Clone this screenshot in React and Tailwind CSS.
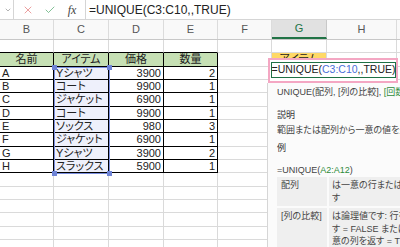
import React from 'react';
import { X, Check, ChevronDown } from 'lucide-react';

const FONT = "font-['Liberation_Sans','Noto_Sans_CJK_JP',sans-serif] [font-feature-settings:'palt']";

const items = [
  ['A', 'Yシャツ', 3900, 2],
  ['B', 'コート', 9900, 1],
  ['C', 'ジャケット', 6900, 1],
  ['D', 'コート', 9900, 1],
  ['E', 'ソックス', 980, 3],
  ['F', 'ジャケット', 6900, 1],
  ['G', 'Yシャツ', 3900, 2],
  ['H', 'スラックス', 5900, 1],
];

// column widths (B..I)
const W = ['w-[54px]', 'w-[55px]', 'w-[55px]', 'w-[54px]', 'w-[54px]', 'w-[55px]', 'w-[70px]', 'w-[30px]'];
const LETTERS = ['B', 'C', 'D', 'E', 'F', 'G', 'H', 'I'];

const Cell = ({ i, className = 'border-[#dadada]', children }) => (
  <div className={`${W[i]} h-full shrink-0 border-r border-b flex items-center px-[2px] overflow-hidden whitespace-nowrap ${className}`}>
    {children}
  </div>
);

const Row = ({ children }) => <div className="flex h-[13.33px]">{children}</div>;

const EmptyRow = () => (
  <Row>
    {W.map((_, i) => <Cell key={i} i={i} />)}
  </Row>
);

const App = () => {
  return (
    <div className={`relative w-[400px] h-[247px] overflow-hidden bg-white text-[#222] ${FONT}`}>
      {/* Formula bar */}
      <div className="flex h-[20px] border-b border-[#d5d5d5] bg-white">
        <div className="w-[14px] h-full flex items-center justify-end pr-[1px] border-r border-[#d5d5d5]">
          <ChevronDown size={8} strokeWidth={1.5} className="text-[#666]" />
        </div>
        <div className="w-[71px] h-full flex items-center">
          <div className="ml-[8px] w-[12px] flex justify-center">
            <X size={12} strokeWidth={1.3} className="text-[#e06b6b]" />
          </div>
          <div className="ml-[10px] w-[12px] flex justify-center">
            <Check size={12} strokeWidth={1.3} className="text-[#3f9f5f]" />
          </div>
          <div className="ml-[10px] w-[12px] flex justify-center font-['Liberation_Serif',serif] italic text-[12px] text-[#444]">
            fx
          </div>
        </div>
        <div className="flex-1 h-full border-l border-[#d5d5d5] flex items-center pl-[3px] text-[12px] whitespace-nowrap">
          =UNIQUE(C3:C10,,TRUE)
        </div>
      </div>

      {/* Column headers */}
      <div className="flex h-[20px] bg-[#f9f9f9] border-b border-[#c8c8c8]">
        {LETTERS.map((l, i) => (
          <div
            key={l}
            className={`${W[i]} h-full shrink-0 flex items-center justify-center border-r text-[11px] ${
              l === 'G'
                ? 'bg-[#e1e1e1] border-[#c8c8c8] border-b-2 border-b-[#217346] text-[#217346]'
                : 'border-[#dcdcdc] text-[#555]'
            }`}
          >
            {l}
          </div>
        ))}
      </div>

      {/* Sheet body */}
      <div className="text-[11px]">
        <Row>
          {W.map((_, i) => (
            <Cell key={i} i={i} className={i < 4 ? 'border-r-[#dadada] border-b-black' : 'border-[#dadada]'} />
          ))}
        </Row>
        <Row>
          {['名前', 'アイテム', '価格', '数量'].map((t, i) => (
            <Cell key={t} i={i} className="border-black bg-[#c6e0b4] justify-center">{t}</Cell>
          ))}
          <Cell i={4} />
          <Cell i={5} className="border-[#dadada] bg-[#ffd966] justify-center">アイテム</Cell>
          <Cell i={6} />
          <Cell i={7} />
        </Row>
        {items.map(([name, item, price, qty]) => (
          <Row key={name}>
            <Cell i={0} className="border-black">{name}</Cell>
            <Cell i={1} className="border-black bg-[#eef0fb]">{item}</Cell>
            <Cell i={2} className="border-black justify-end">{price}</Cell>
            <Cell i={3} className="border-black justify-end">{qty}</Cell>
            <Cell i={4} />
            <Cell i={5} />
            <Cell i={6} />
            <Cell i={7} />
          </Row>
        ))}
        {[0, 1, 2, 3, 4, 5].map((k) => <EmptyRow key={k} />)}
      </div>

      {/* Reference highlight C3:C10 */}
      <div className="absolute left-[54px] top-[66.67px] w-[56px] h-[107px] border-[1.5px] border-[#7b8fe0] pointer-events-none">
        <div className="absolute -left-[3px] -top-[3px] w-[5px] h-[5px] bg-[#6f84d6]" />
        <div className="absolute -right-[3px] -top-[3px] w-[5px] h-[5px] bg-[#6f84d6]" />
        <div className="absolute -left-[3px] -bottom-[3px] w-[5px] h-[5px] bg-[#6f84d6]" />
        <div className="absolute -right-[3px] -bottom-[3px] w-[5px] h-[5px] bg-[#6f84d6]" />
      </div>

      {/* Editing cell G4 with pink marker */}
      <div className="absolute left-[268px] top-[58px] w-[130px] h-[25px] border-[2.5px] border-[#f4a7c3] bg-white">
        <div className="mt-[1.5px] ml-[0.5px] h-[16px] w-[125px] border-[1.5px] border-[#1e7145] flex items-center text-[10.5px] whitespace-nowrap">
          <span>=UNIQUE(</span>
          <span className="text-[#4a6fd8]">C3:C10</span>
          <span>,,TRUE)</span>
          <span className="ml-[1px] w-[1px] h-[11px] bg-black" />
        </div>
      </div>

      {/* Function help panel */}
      <div className="absolute left-[267px] top-[83px] w-[240px] h-[170px] bg-[#fbfbfb] border-l border-[#d6d6d6] pl-[9px] text-[9px] leading-[12px] text-[#444] whitespace-nowrap">
        <div className="mt-[3px]">
          UNIQUE(配列, [列の比較], <span className="text-[#2e8b3a]">[回数指定]</span>)
        </div>
        <div className="mt-[11px] text-[#333]">説明</div>
        <div className="mt-[3px]">範囲または配列から一意の値を返します。</div>
        <div className="mt-[6px] text-[#333]">例</div>
        <div className="mt-[10px]">
          =UNIQUE(<span className="text-[#2e8b3a]">A2:A12</span>)
        </div>
        <div className="mt-[1px] grid grid-cols-[50px_1fr] gap-[2px] leading-[12.5px]">
          <div className="bg-[#efefef] px-[4px] py-[2px]">配列</div>
          <div className="bg-[#efefef] px-[3px] py-[2px]">
            <div>は一意の行または列を返す配列または範囲で</div>
            <div>す</div>
          </div>
          <div className="bg-[#efefef] px-[4px] py-[2px]">[列の比較]</div>
          <div className="bg-[#efefef] px-[3px] py-[2px]">
            <div>は論理値です: 行を比較して一意の行を返</div>
            <div>す = FALSE または省略、列を比較して一</div>
            <div>意の列を返す = TRUE</div>
          </div>
        </div>
      </div>
    </div>
  );
};

export default App;
